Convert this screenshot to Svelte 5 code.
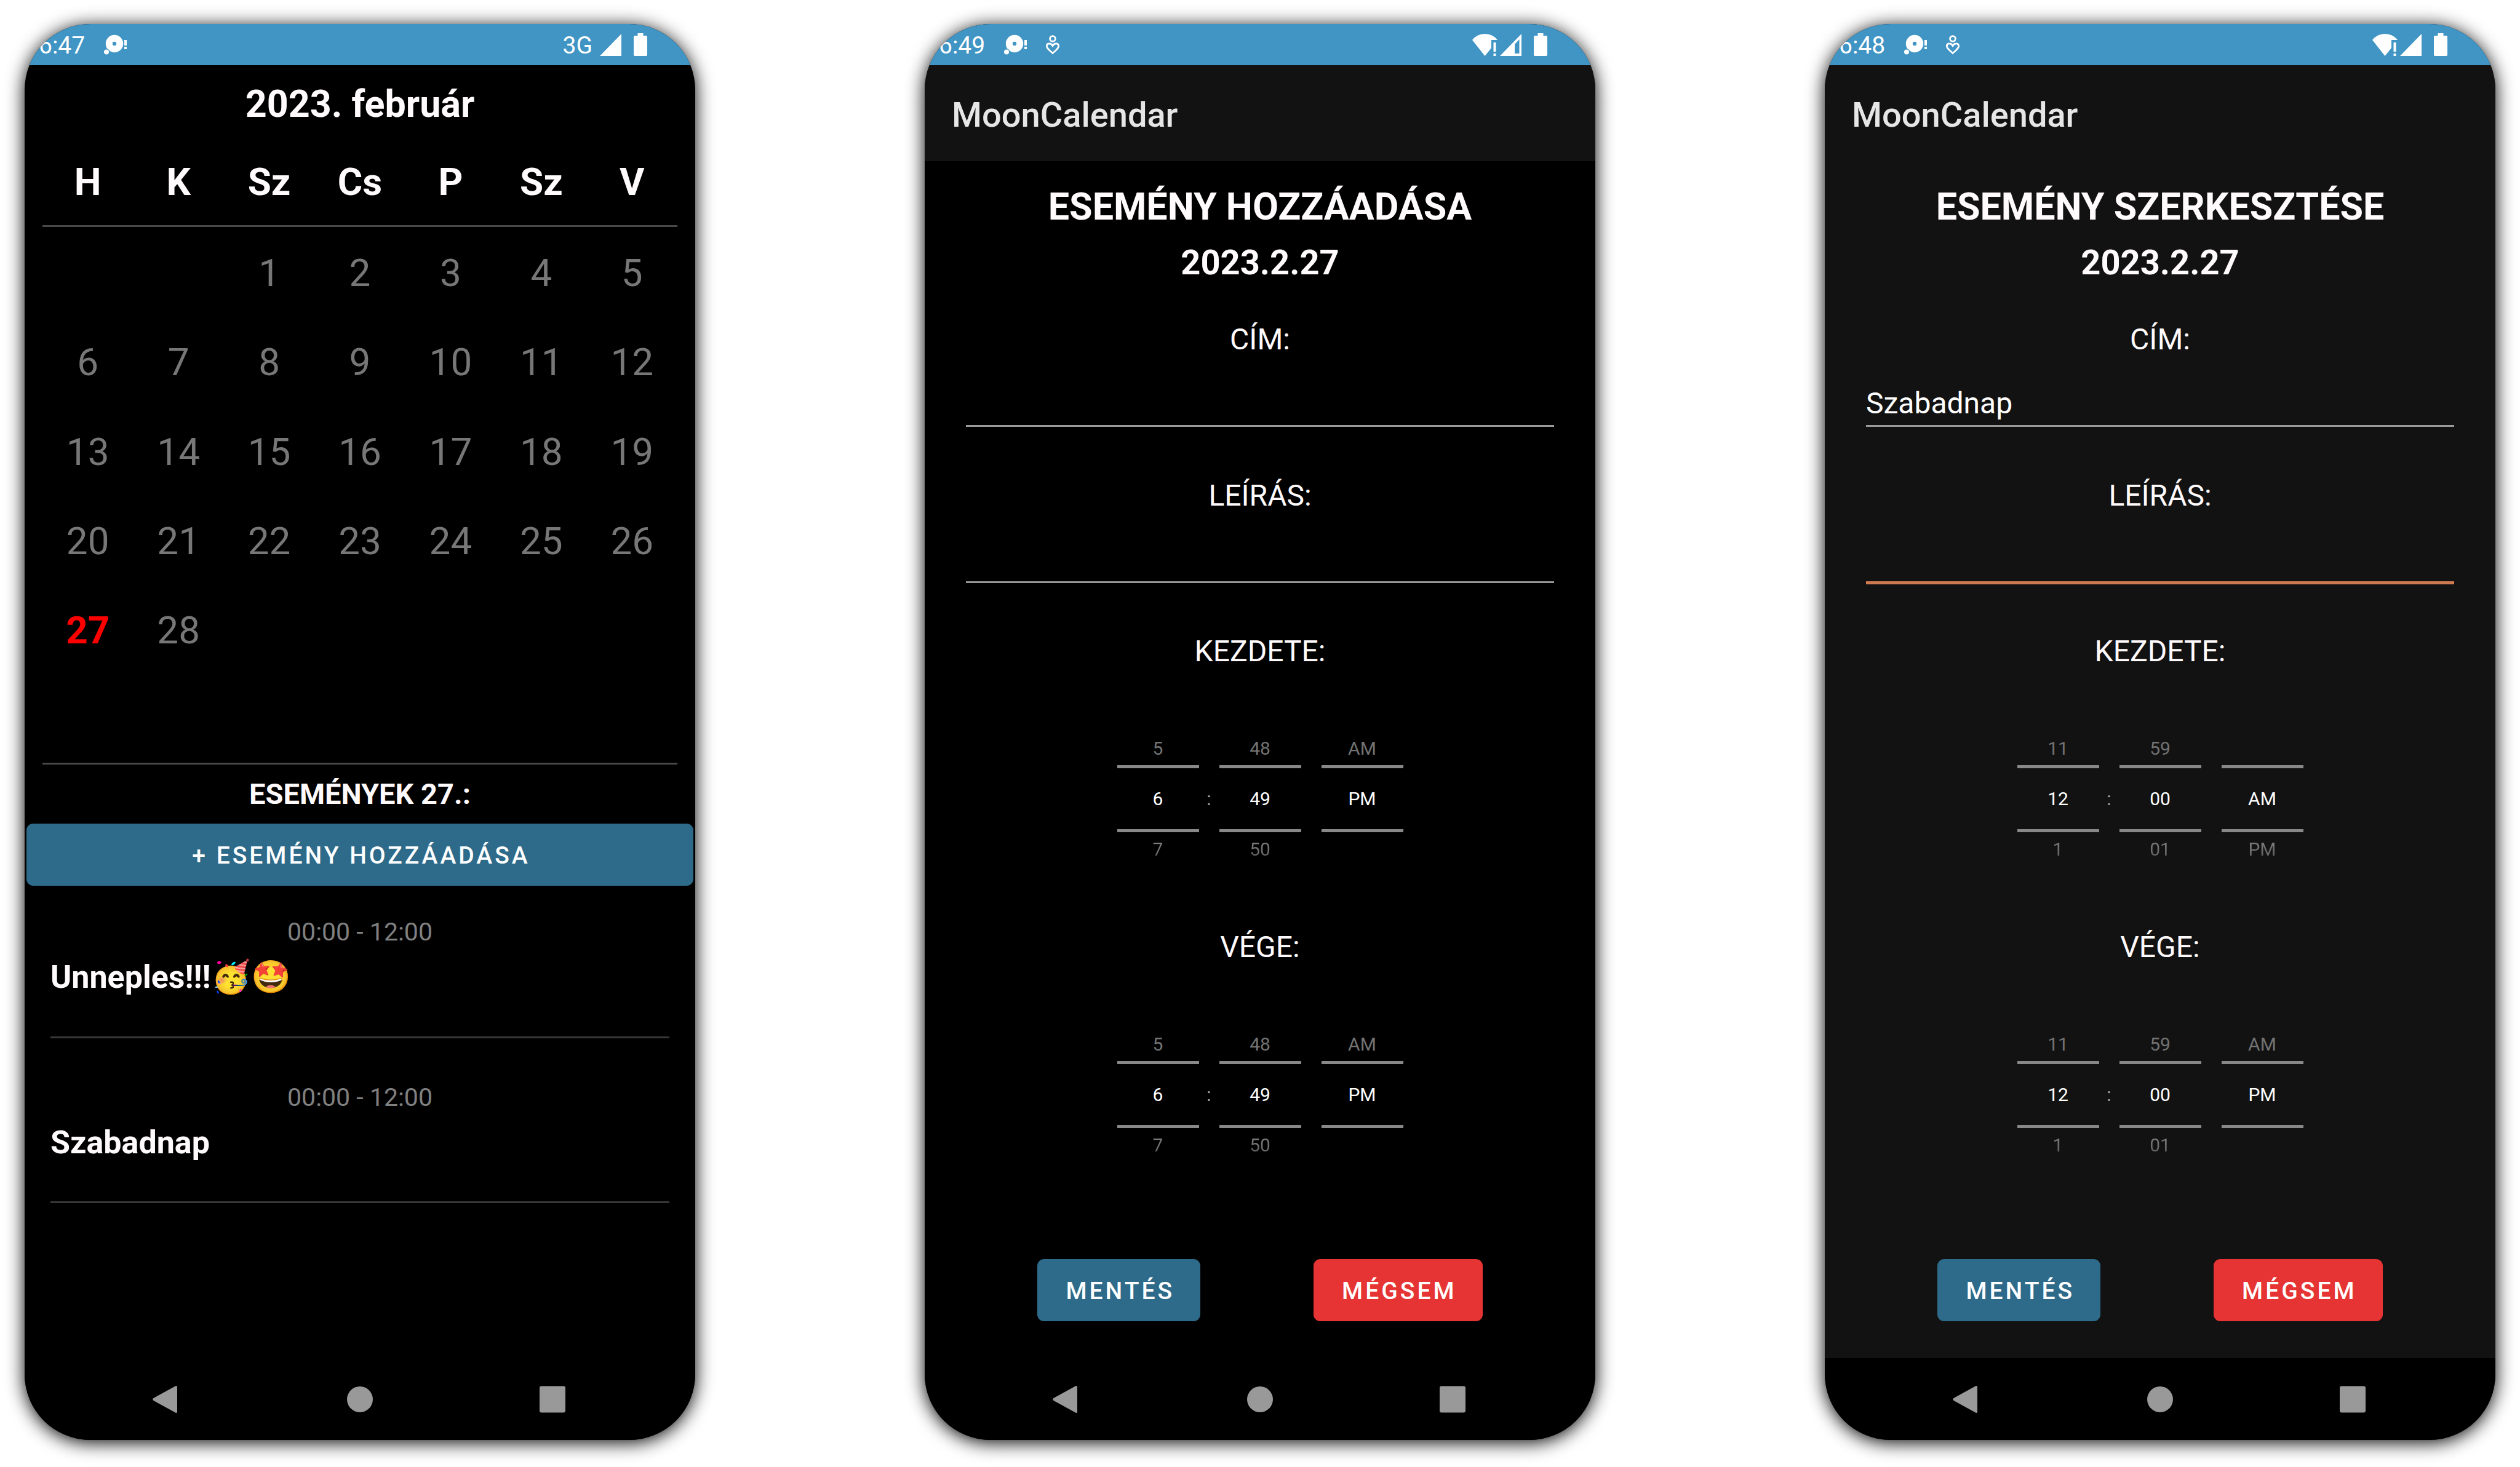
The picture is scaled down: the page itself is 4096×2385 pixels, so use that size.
<script>
  const weekdays = ['H', 'K', 'Sz', 'Cs', 'P', 'Sz', 'V'];
  const days = [null, null, ...Array.from({ length: 28 }, (_, i) => i + 1)];
  const weeks = Array.from({ length: 5 }, (_, w) => Array.from({ length: 7 }, (_, d) => days[w * 7 + d] ?? null));
  const events = [
    { time: '00:00 - 12:00', name: 'Unneples!!!🥳🤩' },
    { time: '00:00 - 12:00', name: 'Szabadnap' },
  ];
  const now = [['5', '6', '7'], ['48', '49', '50'], ['AM', 'PM', '']];
  const forms = [
    {
      id: 'add', clock: '6:49', heading: 'ESEMÉNY HOZZÁADÁSA', title: '', dark: false,
      pickers: [{ label: 'KEZDETE:', wheels: now }, { label: 'VÉGE:', wheels: now }],
    },
    {
      id: 'edit', clock: '6:48', heading: 'ESEMÉNY SZERKESZTÉSE', title: 'Szabadnap', dark: true,
      pickers: [
        { label: 'KEZDETE:', wheels: [['11', '12', '1'], ['59', '00', '01'], ['', 'AM', 'PM']] },
        { label: 'VÉGE:', wheels: [['11', '12', '1'], ['59', '00', '01'], ['AM', 'PM', '']] },
      ],
    },
  ];
</script>

{#snippet statusBar(clock, form, partial)}
  <div class="status">
    <span class="clock">{clock}</span>
    <svg class="disc" viewBox="0 0 37 32" aria-hidden="true">
      <circle cx="17" cy="14" r="14.2" fill="#fff" />
      <circle cx="17" cy="14" r="3.2" fill="#4095c4" />
      <circle cx="4" cy="27.5" r="5.4" fill="#4095c4" />
      <circle cx="4" cy="27.5" r="4" fill="#fff" />
      <path d="M33 8h4v9h-4zM33 19h4v4h-4z" fill="#fff" />
    </svg>
    {#if form}
      <svg class="person" viewBox="0 0 24 32" fill="none" stroke="#fff" stroke-width="2.8" aria-hidden="true">
        <circle cx="12" cy="6" r="4.4" />
        <path d="M12 29.5C7 25 2.300 21.500 2.300 17.900c0-4.800 6.600-5.900 9.700-.4 3.100-5.500 9.700-4.400 9.700.4 0 3.600-4.700 7.100-9.700 11.600z" />
      </svg>
    {/if}
    <span class="spacer"></span>
    {#if form}
      <svg class="wifi" viewBox="0 0 41 36" fill="#fff" aria-hidden="true">
        <path d="M20.500 36 0 10Q8 0 20.500 0T41 10H31V23z" />
        <path d="M34.500 14h4v15h-4zM34.500 32h4v4h-4z" />
      </svg>
    {:else}
      <span class="network">3G</span>
    {/if}
    <svg class="signal" viewBox="0 0 35 36" fill="#fff" fill-rule="evenodd" aria-hidden="true">
      <path d={partial ? 'M35 0V36H0zM31.500 9 24 17V32H31.500z' : 'M35 0V36H0z'} />
    </svg>
    <svg class="battery" viewBox="0 0 22 37" fill="#fff" aria-hidden="true">
      <path d="M6.500 0h9v4H20a2 2 0 0 1 2 2V35a2 2 0 0 1-2 2H2a2 2 0 0 1-2-2V6a2 2 0 0 1 2-2h4.500z" />
    </svg>
  </div>
{/snippet}

{#snippet navBar()}
  <nav class="nav">
    <button aria-label="Vissza"><svg viewBox="0 0 46 46"><path d="M36 1.500Q39 0 39 3V43Q39 46 36 44.500L.500 25Q-2 23 .500 21z" /></svg></button>
    <button aria-label="Kezdőlap"><svg viewBox="0 0 46 46"><circle cx="23" cy="23" r="21" /></svg></button>
    <button aria-label="Áttekintés"><svg viewBox="0 0 46 46"><rect x="2" y="1.500" width="42" height="43" rx="3" /></svg></button>
  </nav>
{/snippet}

<main>
  <section class="phone">
    {@render statusBar('6:47', false, false)}
    <div class="calendar">
      <h1>2023. február</h1>
      <table>
        <thead>
          <tr>{#each weekdays as day}<th>{day}</th>{/each}</tr>
        </thead>
        <tbody>
          {#each weeks as week}
            <tr>{#each week as day}<td class:today={day === 27}>{day ?? ''}</td>{/each}</tr>
          {/each}
        </tbody>
      </table>
    </div>
    <h2 class="events-title">ESEMÉNYEK 27.:</h2>
    <button class="action wide">+ ESEMÉNY HOZZÁADÁSA</button>
    <ul class="events">
      {#each events as event}
        <li><time>{event.time}</time><strong>{event.name}</strong></li>
      {/each}
    </ul>
    {@render navBar()}
  </section>

  {#each forms as form}
    <section class="phone" class:dark={form.dark}>
      {@render statusBar(form.clock, true, !form.dark)}
      <header class="app-bar">MoonCalendar</header>
      <form class="editor">
        <h1>{form.heading}</h1>
        <p class="date">2023.2.27</p>
        <label for="{form.id}-title">CÍM:</label>
        <input id="{form.id}-title" type="text" value={form.title} />
        <label for="{form.id}-description">LEÍRÁS:</label>
        <input id="{form.id}-description" class:active={form.dark} type="text" />
        {#each form.pickers as picker}
          <div class="picker" role="group" aria-label={picker.label}>
            <p class="picker-label">{picker.label}</p>
            <div class="wheels">
              {#each picker.wheels as wheel, i}
                {#if i === 1}<span class="colon">:</span>{/if}
                <div class="wheel">
                  <button type="button" class="before">{wheel[0]}</button>
                  <span class="current">{wheel[1]}</span>
                  <button type="button" class="after">{wheel[2]}</button>
                </div>
              {/each}
            </div>
          </div>
        {/each}
        <div class="actions">
          <button type="button" class="action">MENTÉS</button>
          <button type="button" class="action cancel">MÉGSEM</button>
        </div>
      </form>
      {@render navBar()}
    </section>
  {/each}
</main>

<style>
  :global(body) { margin: 0; background: #fff; }
  main {
    box-sizing: border-box;
    min-height: 100vh;
    display: grid;
    grid-template-columns: repeat(3, 1fr);
    gap: 373px;
    padding: 39px 40px 44px;
    font-family: Roboto, "Liberation Sans", sans-serif;
    color: #fffafc;
  }
  h1, h2, p, ul { margin: 0; padding: 0; }
  button { font: inherit; border: 0; padding: 0; background: none; color: inherit; }
  svg { display: block; overflow: visible; }

  .phone {
    display: flex;
    flex-direction: column;
    overflow: hidden;
    border-radius: 107px;
    background: #000;
    box-shadow: 0 4px 30px #000;
  }
  .phone.dark { background: #121212; }

  .status {
    display: flex;
    align-items: center;
    height: 67px;
    padding: 0 78px 0 23px;
    background: #4095c4;
    color: #fff;
    font-size: 39px;
    line-height: 64px;
  }
  .clock, .network { padding-top: 3px; }
  .clock { width: 106px; }
  .disc { width: 37px; height: 32px; }
  .person { width: 24px; height: 32px; margin-left: 30px; }
  .spacer { flex: 1; }
  .wifi { width: 41px; height: 36px; margin-right: 4px; }
  .network { margin-right: 12px; }
  .signal { width: 35px; height: 36px; margin-right: 20px; }
  .battery { width: 22px; height: 37px; }

  .calendar { padding: 4px 29px 0; }
  h1 { font-size: 61px; font-weight: 700; text-align: center; }
  .calendar h1 { line-height: 118px; }
  table {
    width: 100%;
    height: 1015px;
    table-layout: fixed;
    border-collapse: collapse;
    border-bottom: 3px solid #484848;
    font-size: 62px;
  }
  tbody::after { content: ""; display: table-row; height: 147px; }
  thead tr { height: 139px; border-bottom: 3px solid #484848; }
  th { padding: 0 0 2px; font-weight: 700; text-align: center; }
  tbody tr { height: 145px; }
  td { padding: 7px 0 0; color: #777; text-align: center; }
  .today { color: #f00; font-weight: 700; }

  .events-title { font-size: 47px; line-height: 96px; text-align: center; }
  .action {
    height: 101px;
    padding: 2px 42px 0;
    border-radius: 11px;
    background: #2e6b8a;
    color: #fff;
    font-size: 39px;
    font-weight: 500;
    letter-spacing: 4px;
    text-indent: 4px;
  }
  .wide { margin: 0 3px; }
  .cancel { background: #e63434; }
  .events { list-style: none; padding: 0 42px; }
  .events li {
    display: flex;
    flex-direction: column;
    box-sizing: border-box;
    height: 268px;
    padding-top: 66px;
    border-bottom: 3px solid #383838;
  }
  .events li:first-child { height: 248px; padding-top: 45px; }
  time { color: #808080; font-size: 41px; line-height: 60px; text-align: center; }
  .events strong { font-size: 52px; line-height: 87px; }

  .nav {
    display: grid;
    grid-template-columns: repeat(3, 1fr);
    align-items: center;
    height: 133px;
    margin-top: auto;
    padding: 0 75px;
    background: #000;
  }
  .nav button { display: grid; place-items: center; height: 100%; }
  .nav svg { width: 46px; height: 46px; fill: #999; }

  .app-bar {
    height: 156px;
    padding-left: 44px;
    background: #121212;
    color: #e6e6e6;
    font-size: 56px;
    font-weight: 500;
    line-height: 162px;
  }
  .editor { display: flex; flex-direction: column; padding: 26px 67px 0; }
  .editor h1 { line-height: 96px; }
  .date { font-size: 56px; font-weight: 700; line-height: 86px; text-align: center; }
  label, .picker-label { font-size: 48px; line-height: 64px; text-align: center; }
  label { margin-top: 80px; }
  .date + label { margin-top: 50px; }
  input {
    height: 110px;
    box-sizing: border-box;
    padding: 36px 0 0;
    border: 0;
    border-bottom: 3px solid #999;
    outline: 0;
    background: none;
    color: #fff;
    font: inherit;
    font-size: 48px;
  }
  input.active { height: 112px; margin-bottom: -2px; border-bottom: 5px solid #cf7a50; }
  .picker { height: 481px; }
  .picker-label { padding-top: 79px; }
  .wheels { display: flex; justify-content: center; font-size: 30px; padding-top: 98px; }
  .wheel { width: 133px; }
  .wheel + .wheel { margin-left: 33px; }
  .wheel > * { display: block; width: 100%; height: 55px; line-height: 55px; text-align: center; color: #737373; }
  .wheel .current { height: 99px; line-height: 99px; color: #fff; border-top: 5px solid #888; border-bottom: 5px solid #888; }
  .wheel .after {
    background: linear-gradient(#7c7c7c 30%, #505050);
    background-clip: text;
    color: transparent;
  }
  .colon { width: 33px; text-align: center; align-self: center; color: #aaa; }
  .actions { display: flex; justify-content: center; gap: 184px; margin-top: 137px; }
</style>
